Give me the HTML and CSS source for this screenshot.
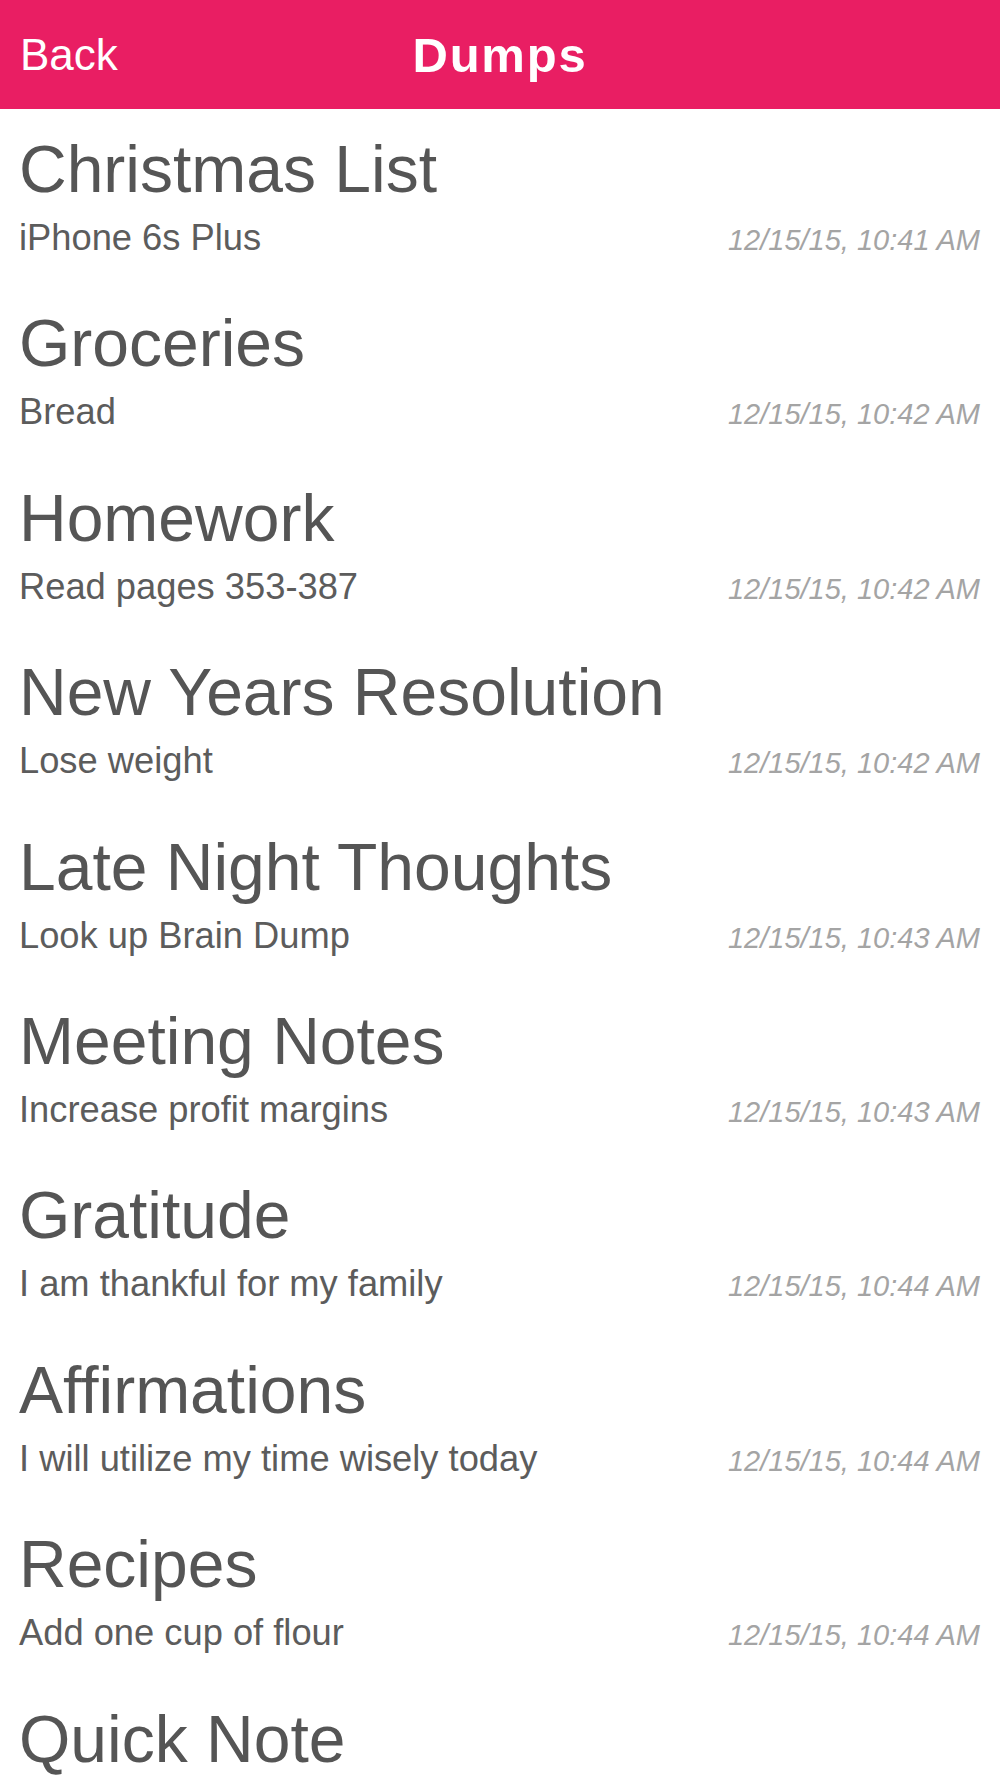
FILE: index.html
```html
<!DOCTYPE html>
<html lang="en">
<head>
  <meta charset="UTF-8" />
  <meta name="viewport" content="width=device-width, initial-scale=1.0" />
  <title>Dumps</title>
  <link rel="stylesheet" href="styles.css">
</head>
<body>
  <header class="navbar">
    <a class="nav-back" href="#">Back</a>
    <h1 class="nav-title">Dumps</h1>
    <span></span>
  </header>

  <main class="dump-list">
    <div class="dump-row">
      <div class="dump-title">Christmas List</div>
      <div class="dump-meta">
        <span class="dump-preview">iPhone 6s Plus</span>
        <span class="dump-date">12/15/15, 10:41 AM</span>
      </div>
    </div>

    <div class="dump-row">
      <div class="dump-title">Groceries</div>
      <div class="dump-meta">
        <span class="dump-preview">Bread</span>
        <span class="dump-date">12/15/15, 10:42 AM</span>
      </div>
    </div>

    <div class="dump-row">
      <div class="dump-title">Homework</div>
      <div class="dump-meta">
        <span class="dump-preview">Read pages 353-387</span>
        <span class="dump-date">12/15/15, 10:42 AM</span>
      </div>
    </div>

    <div class="dump-row">
      <div class="dump-title">New Years Resolution</div>
      <div class="dump-meta">
        <span class="dump-preview">Lose weight</span>
        <span class="dump-date">12/15/15, 10:42 AM</span>
      </div>
    </div>

    <div class="dump-row">
      <div class="dump-title">Late Night Thoughts</div>
      <div class="dump-meta">
        <span class="dump-preview">Look up Brain Dump</span>
        <span class="dump-date">12/15/15, 10:43 AM</span>
      </div>
    </div>

    <div class="dump-row">
      <div class="dump-title">Meeting Notes</div>
      <div class="dump-meta">
        <span class="dump-preview">Increase profit margins</span>
        <span class="dump-date">12/15/15, 10:43 AM</span>
      </div>
    </div>

    <div class="dump-row">
      <div class="dump-title">Gratitude</div>
      <div class="dump-meta">
        <span class="dump-preview">I am thankful for my family</span>
        <span class="dump-date">12/15/15, 10:44 AM</span>
      </div>
    </div>

    <div class="dump-row">
      <div class="dump-title">Affirmations</div>
      <div class="dump-meta">
        <span class="dump-preview">I will utilize my time wisely today</span>
        <span class="dump-date">12/15/15, 10:44 AM</span>
      </div>
    </div>

    <div class="dump-row">
      <div class="dump-title">Recipes</div>
      <div class="dump-meta">
        <span class="dump-preview">Add one cup of flour</span>
        <span class="dump-date">12/15/15, 10:44 AM</span>
      </div>
    </div>

    <div class="dump-row">
      <div class="dump-title">Quick Note</div>
    </div>
  </main>
</body>
</html>
```

FILE: styles.css
```css
html, body {
  height: 100%;
}

body {
  margin: 0;
  font-family: "Liberation Sans", Arial, sans-serif;
  background-color: #ffffff;
  overflow: hidden;
}

.navbar {
  height: 109px;
  background-color: #e91e63;
  color: white;
  display: grid;
  grid-template-columns: 1fr auto 1fr;
  align-items: center;
  padding: 0 20px;
}

.nav-back {
  color: white;
  text-decoration: none;
  font-size: 44px;
  justify-self: start;
}

.nav-title {
  margin: 0;
  font-size: 49px;
  font-weight: bold;
  letter-spacing: 1.8px;
  color: white;
}

.dump-row {
  padding: 27px 20px 25.4px 19px;
}

.dump-title {
  font-size: 66px;
  line-height: 66px;
  color: #555555;
  white-space: nowrap;
}

.dump-meta {
  display: flex;
  justify-content: space-between;
  align-items: baseline;
  margin-top: 16px;
  height: 40px;
}

.dump-preview {
  font-size: 36.3px;
  line-height: 40px;
  color: #5c5c5c;
}

.dump-date {
  font-size: 29px;
  font-style: italic;
  color: #a4a4a4;
}
```
